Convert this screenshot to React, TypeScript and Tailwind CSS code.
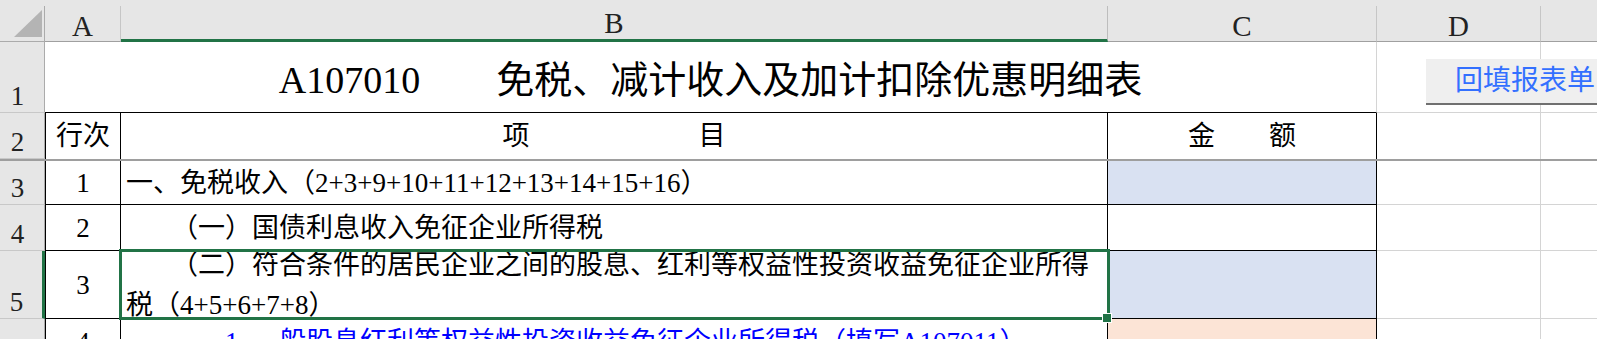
import React from 'react';

const font = "font-['Liberation_Serif','Noto_Sans_CJK_SC',serif]";

function RowHead({ n, selected }: { n: number; selected?: boolean }) {
  return (
    <div
      className={`w-[45px] shrink-0 h-full bg-[#e6e6e6] border-b border-[#c8c8c8] flex items-end justify-center pr-[9px] pb-[2px] text-[27px] leading-[27px] text-[#222] ${
        selected ? 'border-r-[3px] border-r-[#217346]' : 'border-r border-r-[#ababab]'
      }`}
    >
      {n}
    </div>
  );
}

function Grid() {
  return (
    <>
      <div className="w-[164px] shrink-0 h-full border-r border-b border-[#d4d4d4]" />
      <div className="flex-1 h-full border-b border-[#d4d4d4]" />
    </>
  );
}

export default function App() {
  return (
    <div className={`relative w-[1597px] h-[339px] overflow-hidden bg-white text-black ${font}`}>
      {/* column headers */}
      <div className="flex h-[42px] pt-[6px] bg-[#e6e6e6]">
        <div className="w-[45px] shrink-0 h-[36px] border-r border-b border-[#ababab]">
          <svg width="44" height="35" viewBox="0 0 44 35">
            <polygon points="14,31 42,31 42,4" fill="#b4b4b4" />
          </svg>
        </div>
        <div className="w-[76px] shrink-0 h-[36px] border-r border-r-[#c6c6c6] border-b border-b-[#a0a0a0] flex items-end justify-center text-[29px] leading-[30px] text-[#222]">
          A
        </div>
        <div className="w-[987px] shrink-0 h-[36px] border-r border-r-[#bdbdbd] border-b-[3px] border-b-[#217346] flex items-end justify-center text-[29px] leading-[30px] text-[#222] pb-[1px]">
          B
        </div>
        <div className="w-[269px] shrink-0 h-[36px] border-r border-r-[#c6c6c6] border-b border-b-[#a0a0a0] flex items-end justify-center text-[29px] leading-[30px] text-[#222]">
          C
        </div>
        <div className="w-[164px] shrink-0 h-[36px] border-r border-r-[#c6c6c6] border-b border-b-[#a0a0a0] flex items-end justify-center text-[29px] leading-[30px] text-[#222]">
          D
        </div>
        <div className="flex-1 h-[36px] border-b border-b-[#a0a0a0]" />
      </div>

      {/* row 1: title */}
      <div className="flex h-[71px]">
        <RowHead n={1} />
        <div className="w-[1332px] shrink-0 h-full border-b border-black border-r border-r-[#d4d4d4] flex items-center justify-center pt-[6px] text-[38px] leading-[44px] whitespace-nowrap">
          A107010　　免税、减计收入及加计扣除优惠明细表
        </div>
        <Grid />
      </div>

      {/* row 2: column titles */}
      <div className="flex h-[46px]">
        <RowHead n={2} />
        <div className="w-[76px] shrink-0 h-full border-l border-r border-black flex items-center justify-center text-[27px] leading-[40px]">
          行次
        </div>
        <div className="w-[987px] shrink-0 h-full border-r border-black flex items-center justify-center gap-[169px] text-[27px] leading-[40px]">
          <span>项</span>
          <span>目</span>
        </div>
        <div className="w-[269px] shrink-0 h-full border-r border-black flex items-center justify-center text-[27px] leading-[40px] whitespace-pre">
          金　　额
        </div>
        <div className="w-[164px] shrink-0 h-full border-r border-[#d4d4d4]" />
        <div className="flex-1 h-full" />
      </div>

      {/* frozen pane line */}
      <div className="h-[2px] bg-[#9e9e9e]" />

      {/* row 3 */}
      <div className="flex h-[44px]">
        <RowHead n={3} />
        <div className="w-[76px] shrink-0 h-full border-l border-r border-b border-black flex items-center justify-center text-[27px] leading-[40px]">
          1
        </div>
        <div className="w-[987px] shrink-0 h-full border-r border-b border-black flex items-center pl-[5px] text-[27px] leading-[40px] whitespace-nowrap">
          一、免税收入（2+3+9+10+11+12+13+14+15+16）
        </div>
        <div className="w-[269px] shrink-0 h-full border-r border-b border-black bg-[#d9e1f2]" />
        <Grid />
      </div>

      {/* row 4 */}
      <div className="flex h-[46px]">
        <RowHead n={4} />
        <div className="w-[76px] shrink-0 h-full border-l border-r border-b border-black flex items-center justify-center text-[27px] leading-[40px]">
          2
        </div>
        <div className="w-[987px] shrink-0 h-full border-r border-b border-black flex items-center pl-[50px] text-[27px] leading-[40px] whitespace-nowrap">
          （一）国债利息收入免征企业所得税
        </div>
        <div className="w-[269px] shrink-0 h-full border-r border-b border-black" />
        <Grid />
      </div>

      {/* row 5 (selected B5) */}
      <div className="flex h-[68px]">
        <RowHead n={5} selected />
        <div className="w-[76px] shrink-0 h-full border-l border-r border-b border-black flex items-center justify-center text-[27px] leading-[40px]">
          3
        </div>
        <div className="relative w-[987px] shrink-0 h-full border-r border-b border-black flex items-center pl-[5px] text-[27px] leading-[40px] whitespace-nowrap">
          <p className="indent-[45px]">
            （二）符合条件的居民企业之间的股息、红利等权益性投资收益免征企业所得
            <br />
            税（4+5+6+7+8）
          </p>
          <div className="absolute -left-[2px] -top-[2px] -right-[3px] -bottom-[2px] border-[3px] border-[#217346] z-10" />
          <div className="absolute -right-[5px] -bottom-[5px] w-[10px] h-[10px] bg-[#217346] border border-white z-20" />
        </div>
        <div className="w-[269px] shrink-0 h-full border-r border-b border-black bg-[#d9e1f2]" />
        <Grid />
      </div>

      {/* row 6 */}
      <div className="flex h-[46px]">
        <RowHead n={6} />
        <div className="w-[76px] shrink-0 h-full border-l border-r border-b border-black flex items-center justify-center text-[27px] leading-[40px]">
          4
        </div>
        <div className="w-[987px] shrink-0 h-full border-r border-b border-black flex items-center pl-[104px] text-[27px] leading-[40px] whitespace-nowrap text-[#0000ff]">
          1.&nbsp;一般股息红利等权益性投资收益免征企业所得税（填写A107011）
        </div>
        <div className="w-[269px] shrink-0 h-full border-r border-b border-black bg-[#fce4d6]" />
        <Grid />
      </div>

      {/* button shape over column D */}
      <div className="absolute left-[1426px] top-[59px] w-[240px] h-[46px] bg-[#efefef] border-b-2 border-[#707070] flex items-center pl-[29px] text-[28px] leading-[40px] text-[#3370ff] whitespace-nowrap">
        回填报表单
      </div>
    </div>
  );
}
